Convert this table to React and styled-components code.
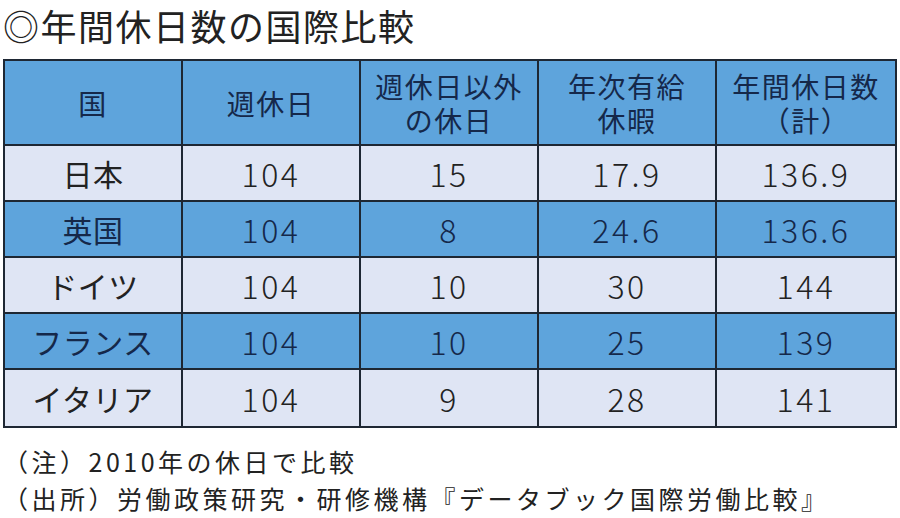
import styled, { createGlobalStyle } from 'styled-components';

const GlobalStyle = createGlobalStyle`
    body {
        margin: 0;
        background: #fff;
        font-family: "Noto Sans CJK JP", "Noto Sans", sans-serif;
        color: #222;
    }
`;

const Page = styled.div`
    width: 900px;
    height: 518px;
    padding: 0 3px;
    box-sizing: border-box;
    overflow: hidden;
`;

const Title = styled.h1`
    margin: 0 0 11px;
    padding-top: 2px;
    font-size: 36px;
    font-weight: 400;
    line-height: 46px;
    letter-spacing: 1.5px;
    color: #222;
`;

const Table = styled.div`
    display: grid;
    grid-template-columns: repeat(5, 1fr);
    grid-template-rows: 85px repeat(5, 56px);
    width: 894px;
    border: 2px solid #1e2733;
    box-sizing: border-box;
`;

const Cell = styled.div`
    display: flex;
    align-items: center;
    justify-content: center;
    text-align: center;
    border-right: 2px solid #1e2733;
    border-bottom: 2px solid #1e2733;
    background: ${p => (p.$blue ? '#5ea4dc' : '#dfe5f4')};
    color: ${p => (p.$blue ? '#15284a' : '#222')};
    font-size: ${p => (p.$head ? '28px' : p.$num ? '32px' : '30px')};
    font-weight: ${p => (p.$num ? 300 : 400)};
    letter-spacing: ${p => (p.$head ? '1.5px' : p.$num ? '2.5px' : '0.5px')};

    &:nth-child(5n) {
        border-right: none;
    }
    &:nth-last-child(-n + 5) {
        border-bottom: none;
    }
`;

const HeadLine = styled.div`
    line-height: 34px;
    height: 34px;
    overflow: visible;
`;

const Notes = styled.div`
    margin-top: 15px;
    font-size: 25px;
    line-height: 37px;
    letter-spacing: 3.5px;
    color: #222;
`;

const header = ['国', '週休日', '週休日以外\nの休日', '年次有給\n休暇', '年間休日数\n（計）'];

const rows = [
    ['日本', '104', '15', '17.9', '136.9'],
    ['英国', '104', '8', '24.6', '136.6'],
    ['ドイツ', '104', '10', '30', '144'],
    ['フランス', '104', '10', '25', '139'],
    ['イタリア', '104', '9', '28', '141'],
];

const App = () => (
    <Page>
        <GlobalStyle />
        <Title>◎年間休日数の国際比較</Title>
        <Table>
            {header.map(h => (
                <Cell key={h} $blue $head>
                    <div>
                        {h.split('\n').map((line, i) => (
                            <HeadLine key={i}>{line}</HeadLine>
                        ))}
                    </div>
                </Cell>
            ))}
            {rows.map((row, r) =>
                row.map((v, c) => (
                    <Cell key={r + '-' + c} $blue={r % 2 === 1} $num={c > 0}>
                        {v}
                    </Cell>
                ))
            )}
        </Table>
        <Notes>
            <div>（注）2010年の休日で比較</div>
            <div>（出所）労働政策研究・研修機構『データブック国際労働比較』</div>
        </Notes>
    </Page>
);

export default App;
